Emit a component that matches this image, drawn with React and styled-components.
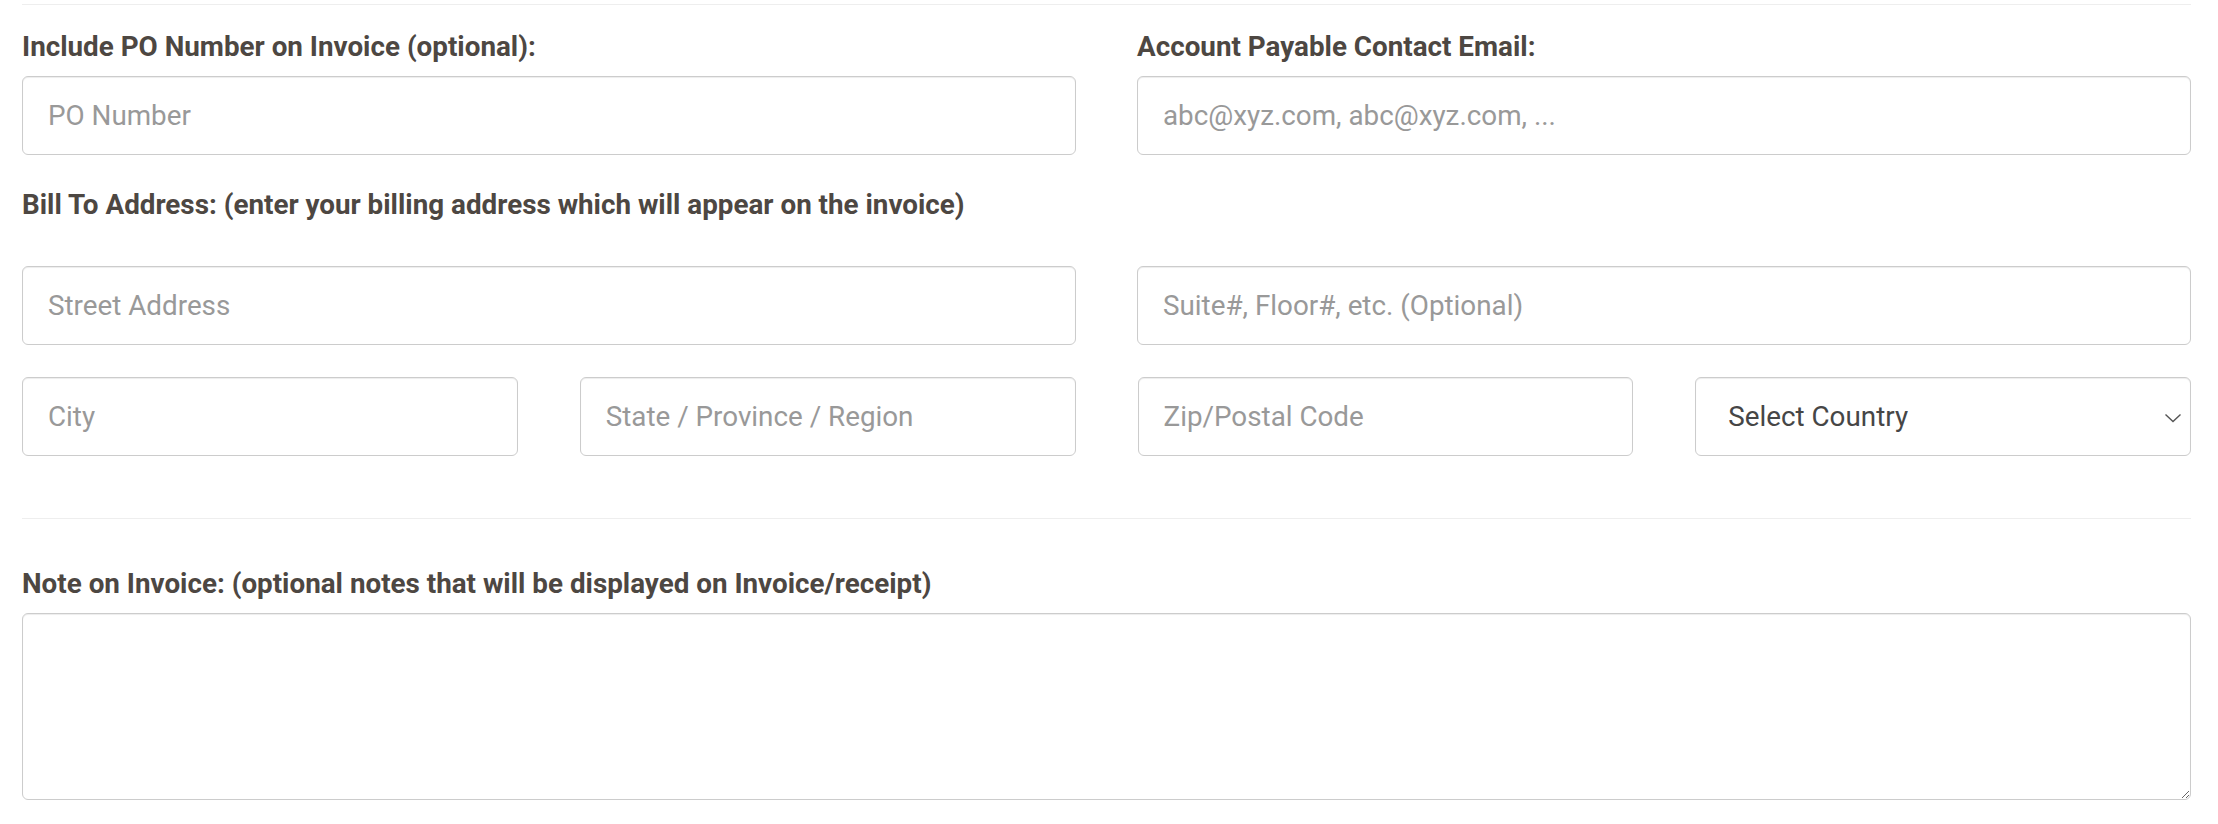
import React from 'react'
import styled, { createGlobalStyle } from 'styled-components'

const GlobalStyle = createGlobalStyle`
  body {
    margin: 0;
    background: #fff;
    font-family: Roboto, "Liberation Sans", Arial, sans-serif;
  }
`

const Form = styled.form`
  padding: 4px 27px 25px 22px;
`

const Divider = styled.hr`
  border: 0;
  border-top: 1px solid #eeeeee;
  margin: ${(props) => props.margin || '0'};
`

const Row = styled.div`
  display: grid;
  grid-template-columns: repeat(${(props) => props.cols || 2}, 1fr);
  column-gap: ${(props) => (props.cols === 4 ? '62px' : '61px')};
  margin-top: ${(props) => props.top || '0'};
`

const Field = styled.div`
  display: flex;
  flex-direction: column;
`

const Label = styled.label`
  display: block;
  font-size: 27.8px;
  line-height: 37px;
  font-weight: 700;
  color: #4d4742;
  margin: ${(props) => props.margin || '0 0 11px'};
`

const inputBase = `
  box-sizing: border-box;
  width: 100%;
  border: 1.5px solid #cccccc;
  border-radius: 6px;
  background: #fff;
  box-shadow: inset 0 1px 1px rgba(0, 0, 0, 0.075);
  font-family: Roboto, "Liberation Sans", Arial, sans-serif;
  font-size: 27.8px;
  color: #444;
  outline: none;
`

const Input = styled.input`
  ${inputBase}
  height: 79px;
  padding: 0 25px;

  &::placeholder {
    color: #999999;
  }
`

const SelectWrap = styled.div`
  position: relative;
`

const Select = styled.select`
  ${inputBase}
  height: 79px;
  padding: 0 60px 0 32px;
  appearance: none;
  color: #464646;
`

const Chevron = styled.svg`
  position: absolute;
  right: 9px;
  top: 50%;
  width: 18px;
  height: 10px;
  margin-top: -4px;
  pointer-events: none;
`

const TextArea = styled.textarea`
  ${inputBase}
  display: block;
  height: 187px;
  padding: 14px 25px;
  resize: vertical;
`

export default function App() {
  return (
    <>
      <GlobalStyle />
      <Form>
        <Divider margin="0 0 23px" />
        <Row>
          <Field>
            <Label>Include PO Number on Invoice (optional):</Label>
            <Input placeholder="PO Number" />
          </Field>
          <Field>
            <Label>Account Payable Contact Email:</Label>
            <Input placeholder="abc@xyz.com, abc@xyz.com, ..." />
          </Field>
        </Row>

        <Label margin="31px 0 43px">
          Bill To Address: (enter your billing address which will appear on the invoice)
        </Label>
        <Row>
          <Input placeholder="Street Address" />
          <Input placeholder="Suite#, Floor#, etc. (Optional)" />
        </Row>
        <Row cols={4} top="32px">
          <Input placeholder="City" />
          <Input placeholder="State / Province / Region" />
          <Input placeholder="Zip/Postal Code" />
          <SelectWrap>
            <Select defaultValue="">
              <option value="">Select Country</option>
              <option value="US">United States</option>
              <option value="CA">Canada</option>
            </Select>
            <Chevron viewBox="0 0 18 10">
              <path d="M1.5 1.5 L9 8.5 L16.5 1.5" fill="none" stroke="#555" strokeWidth="1.4" />
            </Chevron>
          </SelectWrap>
        </Row>

        <Divider margin="62px 0 46px" />
        <Label>Note on Invoice: (optional notes that will be displayed on Invoice/receipt)</Label>
        <TextArea />
      </Form>
    </>
  )
}
